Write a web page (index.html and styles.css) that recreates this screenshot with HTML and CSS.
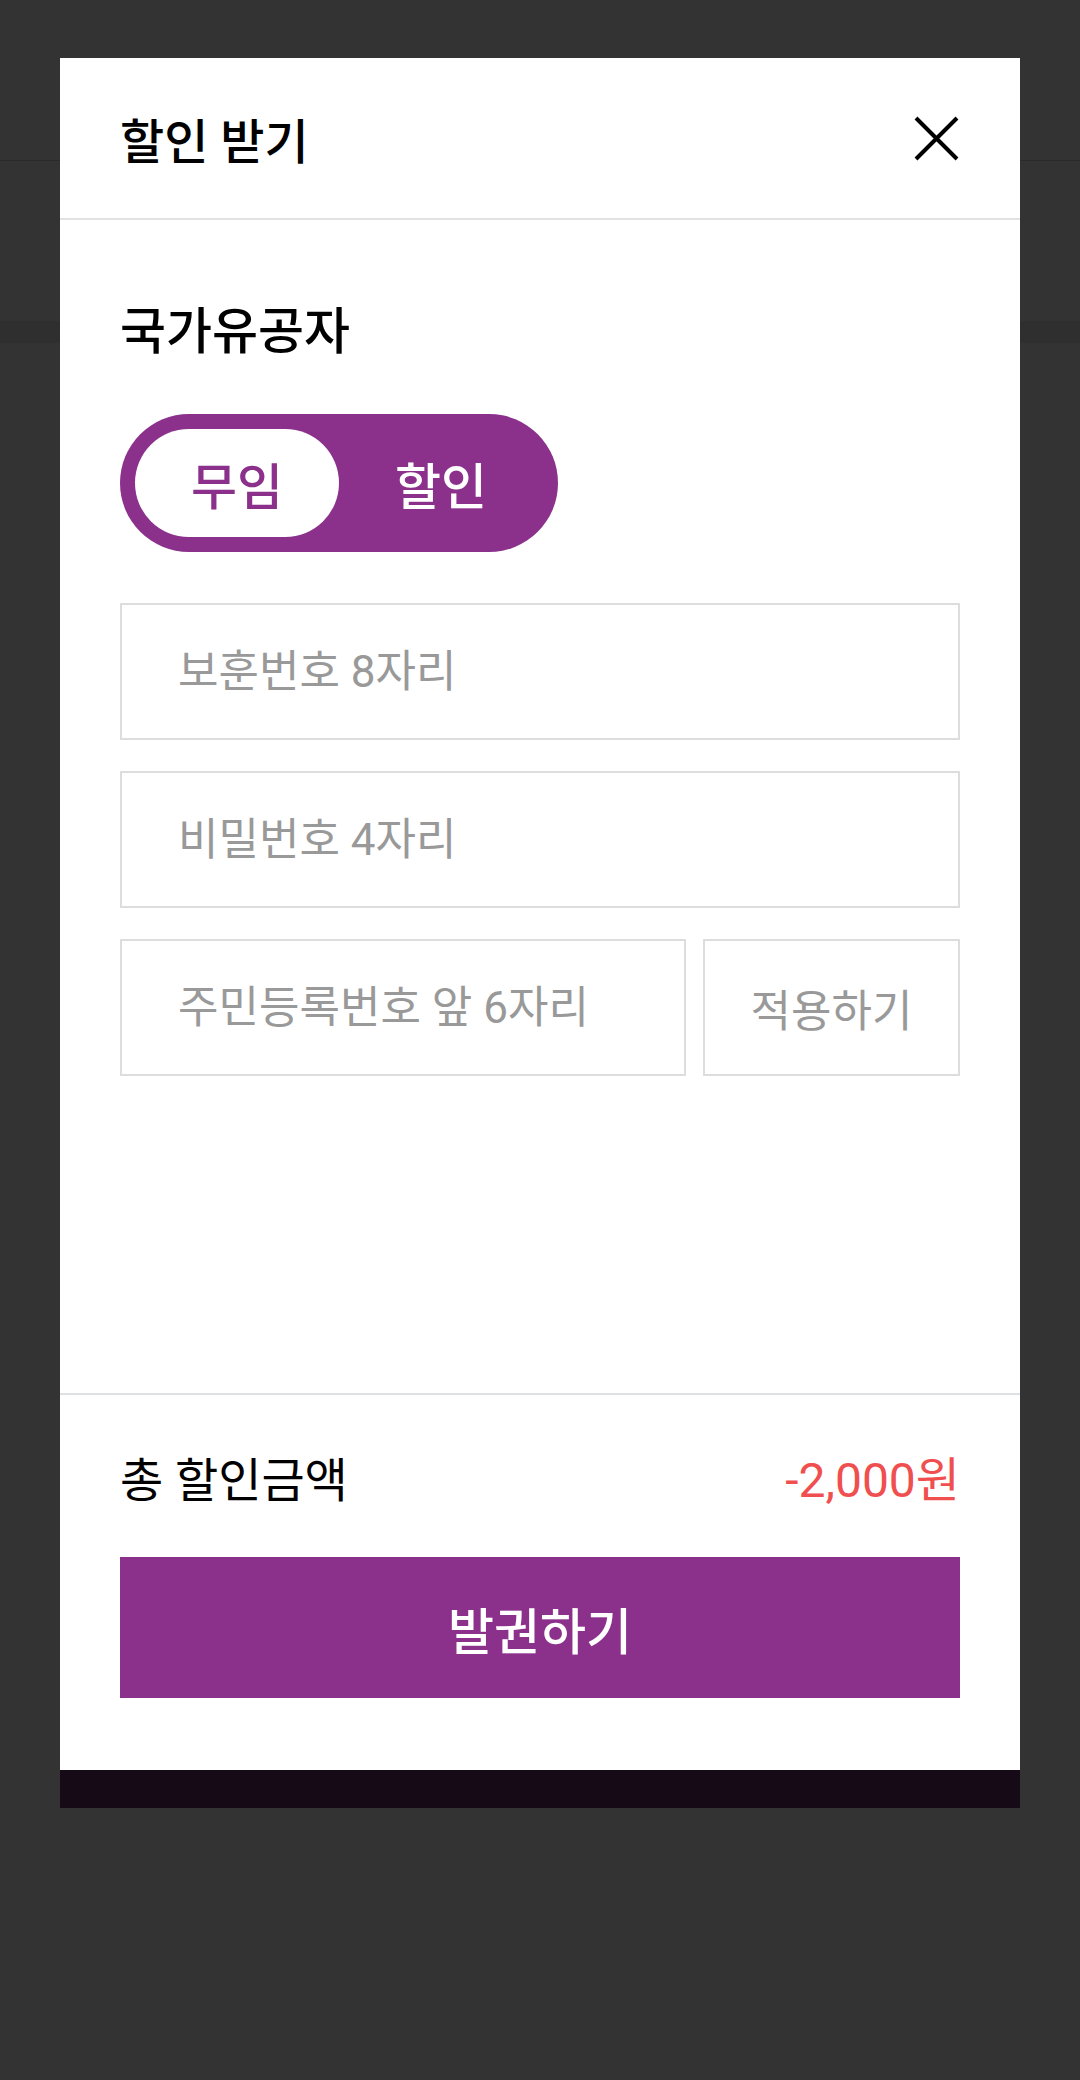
FILE: index.html
```html
<!DOCTYPE html>
<html lang="ko">
<head>
    <meta charset="UTF-8">
    <meta name="viewport" content="width=device-width, initial-scale=1.0">
    <title>할인 받기</title>
    <link rel="stylesheet" href="styles.css">
</head>
<body>
    <div class="modal">
        <!-- Header -->
        <div class="modal-header">
            <h1>할인 받기</h1>
            <button class="close-btn" aria-label="닫기">
                <svg width="47" height="47" viewBox="0 0 47 47">
                    <path d="M3 3 L44 44 M44 3 L3 44" stroke="#000" stroke-width="4" fill="none"/>
                </svg>
            </button>
        </div>

        <!-- Body -->
        <div class="modal-body">
            <h2>국가유공자</h2>

            <div class="toggle">
                <span class="toggle-item active">무임</span>
                <span class="toggle-item">할인</span>
            </div>

            <input type="text" class="field" placeholder="보훈번호 8자리">
            <input type="password" class="field" placeholder="비밀번호 4자리">
            <div class="field-row">
                <input type="text" class="field" placeholder="주민등록번호 앞 6자리">
                <button class="apply-btn">적용하기</button>
            </div>
        </div>

        <!-- Footer -->
        <div class="modal-footer">
            <div class="total">
                <span>총 할인금액</span>
                <span class="amount">-2,000원</span>
            </div>
            <button class="issue-btn">발권하기</button>
        </div>
        <div class="bottom-bar"></div>
    </div>
</body>
</html>
```

FILE: styles.css
```css
body {
    margin: 0;
    padding: 0;
    font-family: Roboto, "Noto Sans CJK KR", sans-serif;
    min-height: 2080px;
    background: linear-gradient(to bottom,
        #333 0, #333 160px,
        #2a2a2a 160px, #2a2a2a 161px,
        #333 161px, #333 321px,
        #2f2f2f 321px, #2f2f2f 343px,
        #333 343px);
}
.modal {
    width: 960px;
    height: 1750px;
    margin: 58px auto 0;
    background-color: #ffffff;
    display: flex;
    flex-direction: column;
}
.modal-header {
    height: 162px;
    box-sizing: border-box;
    border-bottom: 2px solid #e2e2e2;
    padding: 0 60px;
    display: flex;
    align-items: center;
    justify-content: space-between;
}
.modal-header h1 {
    margin: 0;
    font-size: 48px;
    font-weight: 500;
    color: #000;
}
.close-btn {
    border: none;
    background: none;
    padding: 0;
    width: 47px;
    height: 47px;
    cursor: pointer;
}
.close-btn svg {
    display: block;
}
.modal-body {
    flex: 1;
    padding: 77px 60px 0;
    display: flex;
    flex-direction: column;
}
.modal-body h2 {
    margin: 0;
    height: 70px;
    line-height: 70px;
    font-size: 50px;
    font-weight: 500;
    color: #000;
}
.toggle {
    margin-top: 47px;
    width: 438px;
    height: 138px;
    box-sizing: border-box;
    padding: 15px;
    border-radius: 69px;
    background-color: #8b318c;
    display: flex;
}
.toggle-item {
    flex: 1;
    border-radius: 54px;
    display: flex;
    align-items: center;
    justify-content: center;
    font-size: 50px;
    font-weight: 500;
    color: #ffffff;
}
.toggle-item.active {
    background-color: #ffffff;
    color: #8b318c;
}
.field {
    display: block;
    width: 100%;
    height: 137px;
    box-sizing: border-box;
    margin: 0;
    padding: 0 0 0 56px;
    border: 2px solid #dddddd;
    border-radius: 0;
    font-family: inherit;
    font-size: 44px;
    color: #333;
    outline: none;
}
.field::placeholder {
    color: #999999;
}
.toggle + .field {
    margin-top: 51px;
}
.field + .field,
.field + .field-row {
    margin-top: 31px;
}
.field-row {
    display: flex;
    gap: 17px;
}
.field-row .field {
    flex: 1;
    width: auto;
    min-width: 0;
}
.apply-btn {
    flex: 0 0 257px;
    height: 137px;
    box-sizing: border-box;
    border: 2px solid #dddddd;
    background-color: #ffffff;
    font-family: inherit;
    font-size: 44px;
    color: #999999;
    cursor: pointer;
}
.modal-footer {
    border-top: 2px solid #dde1e5;
    padding: 0 60px 72px;
}
.total {
    height: 162px;
    display: flex;
    align-items: center;
    justify-content: space-between;
    font-size: 47px;
    color: #000;
}
.total .amount {
    font-size: 48px;
    color: #f04f4f;
}
.issue-btn {
    display: block;
    width: 100%;
    height: 141px;
    border: none;
    background-color: #8b318c;
    color: #ffffff;
    font-family: inherit;
    font-size: 50px;
    font-weight: 500;
    cursor: pointer;
}
.bottom-bar {
    height: 38px;
    background-color: #160a16;
}
```
